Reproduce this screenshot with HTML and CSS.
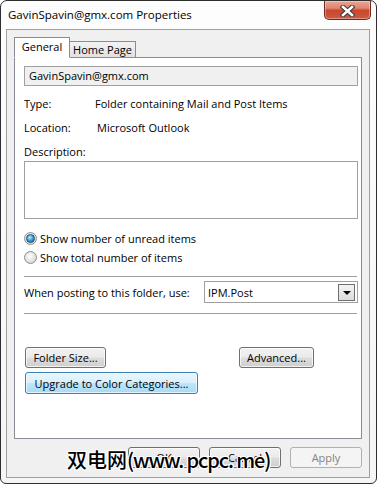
FILE: index.html
```html
<!DOCTYPE html>
<html>

<head>
    <title>GavinSpavin@gmx.com Properties</title>
    <link rel="stylesheet" href="styles.css">
</head>

<body>
    <div class="window">
        <div class="titlebar">
            <span class="title">GavinSpavin@gmx.com Properties</span>
            <button class="close-btn">
                <svg width="15" height="12" viewBox="0 0 15 12">
                    <path d="M3 2 L12 10 M12 2 L3 10" stroke="#3b3b3b" stroke-width="4.6" stroke-linecap="square" fill="none"/>
                    <path d="M3 2 L12 10 M12 2 L3 10" stroke="#ffffff" stroke-width="2.6" stroke-linecap="square" fill="none"/>
                </svg>
            </button>
        </div>

        <div class="client">
            <div class="tabs">
                <div class="tab active">General</div>
                <div class="tab">Home Page</div>
            </div>

            <div class="panel">
                <div class="name-box">GavinSpavin@gmx.com</div>

                <div class="info-row first">
                    <span class="info-label">Type:</span>
                    <span>Folder containing Mail and Post Items</span>
                </div>
                <div class="info-row">
                    <span class="info-label">Location:</span>
                    <span class="info-value-shift">Microsoft Outlook</span>
                </div>
                <div class="info-row">
                    <span class="info-label">Description:</span>
                </div>
                <div class="desc-box"></div>

                <div class="radio-row first">
                    <span class="radio checked"></span>
                    <span>Show number of unread items</span>
                </div>
                <div class="radio-row">
                    <span class="radio"></span>
                    <span>Show total number of items</span>
                </div>

                <div class="separator"></div>

                <div class="post-row">
                    <span>When posting to this folder, use:</span>
                    <div class="combo">
                        <span>IPM.Post</span>
                        <span class="combo-arrow"></span>
                    </div>
                </div>

                <div class="separator second"></div>

                <div class="button-row">
                    <button class="btn folder-btn">Folder Size...</button>
                    <button class="btn advanced-btn">Advanced...</button>
                </div>
                <button class="btn btn-hot upgrade-btn">Upgrade to Color Categories...</button>
            </div>

            <div class="dialog-buttons">
                <button class="btn dlg-btn">OK</button>
                <button class="btn dlg-btn">Cancel</button>
                <button class="btn dlg-btn disabled">Apply</button>
            </div>
        </div>

        <div class="watermark">双电网<span class="watermark-url">(www. pcpc. me)</span></div>
    </div>
</body>

</html>
```

FILE: styles.css
```css
* {
    box-sizing: border-box;
}

body {
    margin: 0;
    background: #ffffff;
    font-family: "Open Sans", "Noto Sans", sans-serif;
    font-size: 11px;
    color: #000000;
}

.window {
    position: relative;
    width: 377px;
    height: 484px;
    border: 1px solid #2e2e2e;
    border-radius: 7px 7px 6px 6px;
    background: linear-gradient(#fdfdfd, #f4f5f6);
    display: flex;
    flex-direction: column;
    overflow: hidden;
}

.titlebar {
    height: 28px;
    display: flex;
    align-items: flex-start;
}

.title {
    margin: 6px 0 0 7px;
    font-size: 11.5px;
    line-height: 16px;
}

.close-btn {
    margin-left: auto;
    margin-right: 5px;
    width: 47px;
    height: 19px;
    padding: 0;
    border: 1px solid #6e2a1d;
    border-top: none;
    border-radius: 0 0 5px 5px;
    background: linear-gradient(#eaa797 0%, #df8470 40%, #c9472d 52%, #cf5a40 100%);
    box-shadow: inset 0 0 0 1px rgba(255, 255, 255, 0.35);
    display: flex;
    align-items: center;
    justify-content: center;
}

.close-btn svg {
    display: block;
    margin-top: 1px;
}

.client {
    height: 449px;
    margin: 0 6px 0 5px;
    border: 1px solid #a0a0a0;
    background: #f0f0f0;
    padding: 7px 7px 0 7px;
}

.tabs {
    display: flex;
    align-items: flex-end;
    height: 21px;
    margin-bottom: -1px;
    position: relative;
    z-index: 1;
}

.tab {
    height: 17px;
    width: 66px;
    border: 1px solid #898c95;
    border-left: none;
    background: linear-gradient(#f3f3f3, #e1e1e1);
    text-align: center;
    line-height: 15px;
    font-size: 11px;
}

.tab.active {
    height: 21px;
    width: 56px;
    border-left: 1px solid #898c95;
    border-bottom: 1px solid #ffffff;
    background: #ffffff;
    line-height: 18px;
}

.panel {
    height: 382px;
    background: #ffffff;
    border: 1px solid #898c95;
    padding: 8px 3px 0 9px;
}

.name-box {
    height: 20px;
    border: 1px solid #a0a0a0;
    background: #f0f0f0;
    padding-left: 4px;
    line-height: 18px;
}

.info-row {
    display: flex;
    height: 16px;
    line-height: 16px;
    margin-top: 8px;
}

.info-row.first {
    margin-top: 10px;
}

.info-label {
    width: 71px;
    flex: none;
}

.info-value-shift {
    padding-left: 2px;
}

.desc-box {
    height: 58px;
    margin-top: 1px;
    border: 1px solid #a0a0a0;
}

.radio-row {
    display: flex;
    align-items: center;
    gap: 3px;
    height: 16px;
    margin-top: 3px;
}

.radio-row.first {
    margin-top: 11px;
}

.radio {
    width: 13px;
    height: 13px;
    border-radius: 50%;
    border: 1px solid #8e8f8f;
    background: radial-gradient(circle at 45% 40%, #ffffff, #e2e2e2 55%, #c6c6c6);
    display: flex;
    align-items: center;
    justify-content: center;
}

.radio.checked::after {
    content: "";
    width: 7px;
    height: 7px;
    border-radius: 50%;
    border: 1px solid #1c4f79;
    background: radial-gradient(circle at 40% 35%, #c4ecfc, #3c9fd8 50%, #155a91);
}

.separator {
    height: 1px;
    margin: 11px 1px 0 0;
    background: #a0a0a0;
}

.separator.second {
    margin-top: 10px;
}

.post-row {
    display: flex;
    align-items: center;
    justify-content: space-between;
    margin-top: 4px;
}

.combo {
    width: 154px;
    height: 22px;
    border: 1px solid #a0a0a0;
    display: flex;
    align-items: center;
    justify-content: space-between;
    padding: 0 2px 0 3px;
}

.combo-arrow {
    width: 17px;
    height: 17px;
    border: 1px solid #6f6f6f;
    background: linear-gradient(#f4f4f4, #dcdcdc);
    display: flex;
    align-items: center;
    justify-content: center;
}

.combo-arrow::after {
    content: "";
    border-left: 4px solid transparent;
    border-right: 4px solid transparent;
    border-top: 4px solid #000000;
    margin-top: 1px;
}

.btn {
    height: 21px;
    padding: 0;
    border: 1px solid #707070;
    border-radius: 3px;
    background: linear-gradient(#f2f2f2 0%, #ebebeb 48%, #dddddd 52%, #cfcfcf 100%);
    box-shadow: inset 0 0 0 1px rgba(255, 255, 255, 0.7);
    font-family: "Open Sans", "Noto Sans", sans-serif;
    font-size: 11px;
    color: #000000;
}

.button-row {
    display: flex;
    gap: 133px;
    margin: 33px 0 0 1px;
}

.folder-btn {
    width: 81px;
}

.advanced-btn {
    width: 75px;
}

.upgrade-btn {
    display: block;
    width: 173px;
    height: 22px;
    margin: 4px 0 0 1px;
}

.btn-hot {
    border-color: #3c7fb1;
    background: linear-gradient(#eaf6fd 0%, #d9f0fc 48%, #bee6fd 52%, #a7d9f5 100%);
}

.dialog-buttons {
    display: flex;
    justify-content: flex-end;
    gap: 9px;
    margin-top: 8px;
}

.dlg-btn {
    width: 72px;
}

.dlg-btn.disabled {
    border-color: #adb2b5;
    background: #f4f4f4;
    box-shadow: none;
    color: #838383;
}

.watermark {
    position: absolute;
    left: 66px;
    top: 447px;
    font-family: "Noto Sans CJK SC", sans-serif;
    font-size: 20px;
    font-weight: 500;
    line-height: 24px;
    color: #000000;
    white-space: nowrap;
    text-shadow: 1px 0 0 #fff, -1px 0 0 #fff, 0 1px 0 #fff, 0 -1px 0 #fff,
        1px 1px 0 #fff, -1px -1px 0 #fff, 1px -1px 0 #fff, -1px 1px 0 #fff;
}

.watermark-url {
    letter-spacing: -1.1px;
}
```
